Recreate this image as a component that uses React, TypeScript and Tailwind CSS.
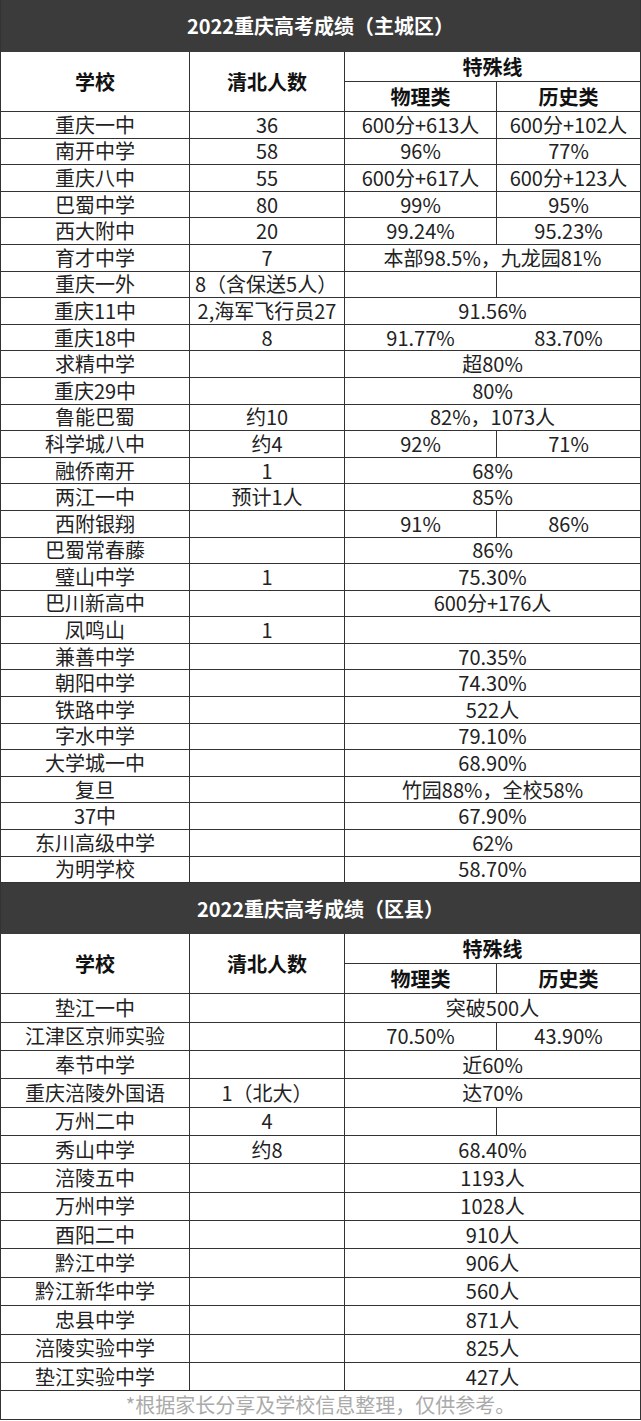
type Row = {
  s: string;
  q?: string;
  p?: string;
  h?: string;
  split?: boolean;
  noLine?: boolean;
  qLeft?: boolean;
};

const cols = "grid grid-cols-[189px_155px_152px_143px]";

const mainRows: Row[] = [
  { s: "重庆一中", q: "36", p: "600分+613人", h: "600分+102人", split: true },
  { s: "南开中学", q: "58", p: "96%", h: "77%", split: true },
  { s: "重庆八中", q: "55", p: "600分+617人", h: "600分+123人", split: true },
  { s: "巴蜀中学", q: "80", p: "99%", h: "95%", split: true },
  { s: "西大附中", q: "20", p: "99.24%", h: "95.23%", split: true },
  { s: "育才中学", q: "7", p: "本部98.5%，九龙园81%" },
  { s: "重庆一外", q: "8（含保送5人）", split: true, qLeft: true },
  { s: "重庆11中", q: "2,海军飞行员27", p: "91.56%" },
  { s: "重庆18中", q: "8", p: "91.77%", h: "83.70%", split: true, noLine: true },
  { s: "求精中学", p: "超80%" },
  { s: "重庆29中", p: "80%" },
  { s: "鲁能巴蜀", q: "约10", p: "82%，1073人" },
  { s: "科学城八中", q: "约4", p: "92%", h: "71%", split: true },
  { s: "融侨南开", q: "1", p: "68%" },
  { s: "两江一中", q: "预计1人", p: "85%" },
  { s: "西附银翔", p: "91%", h: "86%", split: true },
  { s: "巴蜀常春藤", p: "86%" },
  { s: "璧山中学", q: "1", p: "75.30%" },
  { s: "巴川新高中", p: "600分+176人" },
  { s: "凤鸣山", q: "1" },
  { s: "兼善中学", p: "70.35%" },
  { s: "朝阳中学", p: "74.30%" },
  { s: "铁路中学", p: "522人" },
  { s: "字水中学", p: "79.10%" },
  { s: "大学城一中", p: "68.90%" },
  { s: "复旦", p: "竹园88%，全校58%" },
  { s: "37中", p: "67.90%" },
  { s: "东川高级中学", p: "62%" },
  { s: "为明学校", p: "58.70%" },
];

const countyRows: Row[] = [
  { s: "垫江一中", p: "突破500人" },
  { s: "江津区京师实验", p: "70.50%", h: "43.90%", split: true },
  { s: "奉节中学", p: "近60%" },
  { s: "重庆涪陵外国语", q: "1（北大）", p: "达70%" },
  { s: "万州二中", q: "4", split: true },
  { s: "秀山中学", q: "约8", p: "68.40%" },
  { s: "涪陵五中", p: "1193人" },
  { s: "万州中学", p: "1028人" },
  { s: "酉阳二中", p: "910人" },
  { s: "黔江中学", p: "906人" },
  { s: "黔江新华中学", p: "560人" },
  { s: "忠县中学", p: "871人" },
  { s: "涪陵实验中学", p: "825人" },
  { s: "垫江实验中学", p: "427人" },
];

function TitleBar({ text, h }: { text: string; h: string }) {
  return (
    <div
      className={`${h} flex items-center justify-center bg-[#3b3b3b] text-[20px] font-bold leading-none text-white`}
    >
      {text}
    </div>
  );
}

function Header({ top, bottom }: { top: string; bottom: string }) {
  return (
    <div className={`${cols} grid-rows-[30px_30px] text-[20px] font-bold leading-none text-[#111]`}>
      <div className="row-span-2 flex items-center justify-center border-r border-b border-[#333]">
        学校
      </div>
      <div className="row-span-2 flex items-center justify-center border-r border-b border-[#333]">
        清北人数
      </div>
      <div className={`col-span-2 flex items-center justify-center border-b border-[#333] ${top}`}>
        特殊线
      </div>
      <div className={`flex items-center justify-center border-r border-b border-[#333] ${bottom}`}>
        物理类
      </div>
      <div className={`flex items-center justify-center border-b border-[#333] ${bottom}`}>
        历史类
      </div>
    </div>
  );
}

function DataRow({ r, h }: { r: Row; h: string }) {
  return (
    <div className={`${cols} ${h} border-b border-[#333] text-[20px] leading-none text-[#222]`}>
      <div className="flex items-center justify-center whitespace-nowrap border-r border-[#333]">
        {r.s}
      </div>
      <div
        className={`flex items-center whitespace-nowrap border-r border-[#333] ${
          r.qLeft ? "justify-start pl-[5px]" : "justify-center"
        }`}
      >
        {r.q}
      </div>
      {r.split ? (
        <>
          <div
            className={`flex items-center justify-center whitespace-nowrap border-r ${
              r.noLine ? "border-transparent" : "border-[#333]"
            }`}
          >
            {r.p}
          </div>
          <div className="flex items-center justify-center whitespace-nowrap">{r.h}</div>
        </>
      ) : (
        <div className="col-span-2 flex items-center justify-center whitespace-nowrap">{r.p}</div>
      )}
    </div>
  );
}

export default function App() {
  return (
    <div className="min-h-screen bg-white">
      <div className="w-[641px] border-x border-b border-[#333] font-['Noto_Sans_CJK_SC','Noto_Sans',sans-serif]">
        <TitleBar text="2022重庆高考成绩（主城区）" h="h-[52px]" />
        <Header top="" bottom="" />
        {mainRows.map((r) => (
          <DataRow key={r.s} r={r} h="h-[26.6px]" />
        ))}
        <TitleBar text="2022重庆高考成绩（区县）" h="h-[51px]" />
        <Header top="" bottom="" />
        {countyRows.map((r) => (
          <DataRow key={r.s} r={r} h="h-[28.36px]" />
        ))}
        <div className="flex h-[28px] items-center justify-center text-[20px] leading-none text-[#aaa]">
          *根据家长分享及学校信息整理，仅供参考。
        </div>
      </div>
    </div>
  );
}
